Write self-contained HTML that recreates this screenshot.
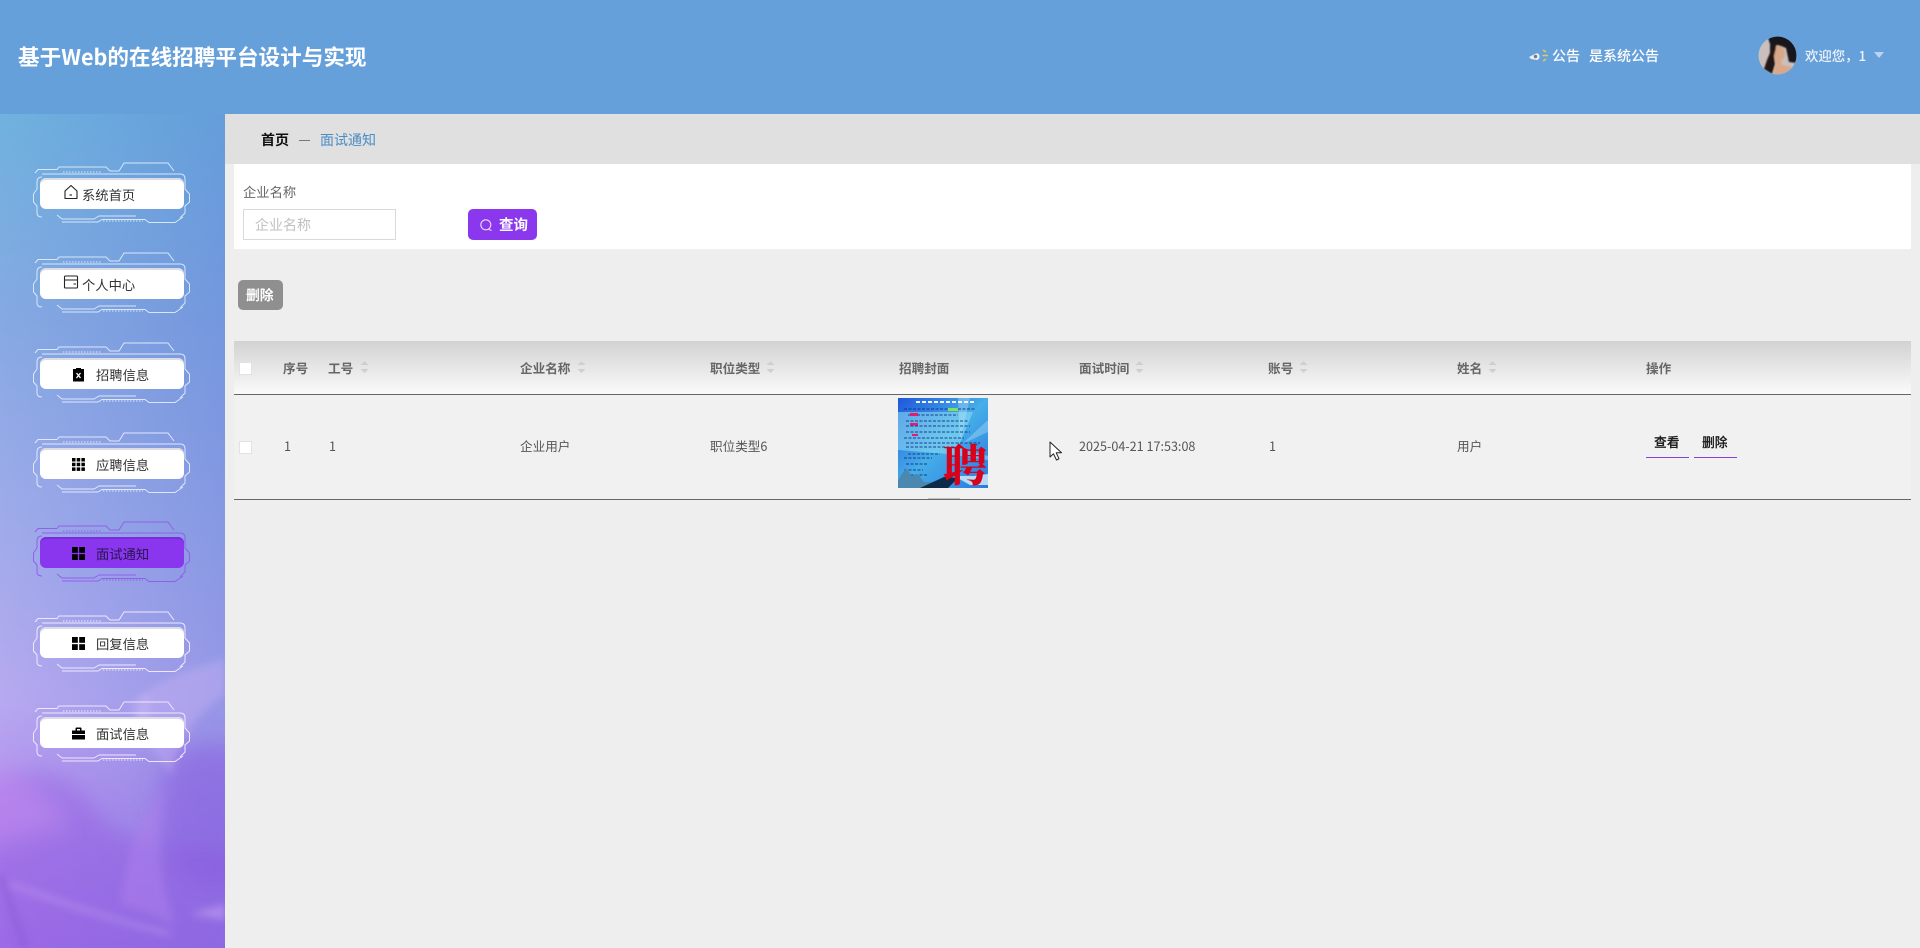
<!DOCTYPE html>
<html lang="zh">
<head>
<meta charset="utf-8">
<title>基于Web的在线招聘平台设计与实现</title>
<style>
html,body{margin:0;padding:0;width:1920px;height:948px;overflow:hidden;background:#eeeeee;font-family:"Noto Sans CJK SC","Liberation Sans",sans-serif;color:#555}
.a{position:absolute;white-space:nowrap}
.c{line-height:20px;height:20px}
#header{left:0;top:0;width:1920px;height:114px;background:#66a0da}
#side{left:0;top:114px;width:225px;height:834px;overflow:hidden;background:linear-gradient(90deg,rgba(75,110,210,0) 0%,rgba(75,110,210,.3) 100%),linear-gradient(180deg,#6fb2de 0%,#86a9e2 25%,#a0abea 50%,#b7a9f0 70%,#b492ee 82%,#a877ea 100%)}
.btn{position:absolute;left:40px;width:144px;height:31px;background:#fff;border-radius:6px;box-shadow:inset 0 2px 0 #dcdce4;font-size:13.3px;color:#333}
.btn.on{background:#8a35ee;box-shadow:inset 0 2px 0 #7a2cdc;color:#2a1650}
.btn span{position:absolute;top:7px;line-height:20px;white-space:nowrap}
.th{font-size:12.6px;font-weight:700;color:#666;top:358px}
.td{font-size:12.6px;color:#555;top:436px}
.sort{position:absolute;top:360px;width:9px;height:14px}
</style>
</head>
<body>
<svg width="0" height="0" style="position:absolute">
<defs>
<symbol id="fr" viewBox="0 0 180 100">
<path d="M15 22L18 18.500H37L39 16H86L90 20H99L104 12H148L154 20" fill="none" stroke-width="1"/>
<path d="M43 21H81" fill="none" stroke-width="1" stroke-dasharray="1.500 1.500"/>
<path d="M22 26Q17 26 17 31V38L13.500 43V51L17 55V62Q17 66 22 66" fill="none" stroke-width="1"/>
<path d="M22 23H160Q165 23 165 28V38L169.500 43V51L165 55V62L160 67" fill="none" stroke-width="1"/>
<path d="M37 64L42 68H74L79 65H116" fill="none" stroke-width="1"/>
<path d="M42 71H78L82 68.500H125L129 71.500H155L163 66" fill="none" stroke-width="1"/>
<path d="M83 70H123" fill="none" stroke-width="1" stroke-dasharray="1.500 1.500"/>
</symbol>
</defs>
</svg>

<div id="header" class="a">
  <div class="a" style="left:18px;top:41px;font-size:21.600px;line-height:32px;font-weight:700;color:#fff">基于Web的在线招聘平台设计与实现</div>
  <svg class="a" style="left:1528px;top:48px" width="22" height="16" viewBox="0 0 22 16">
    <path d="M1 9L8 5.500Q11 5 11.500 8Q12 11 9 12L3 11Z" fill="#e9eef2"/>
    <circle cx="7.500" cy="8.500" r="1.700" fill="#6d7d8c"/>
    <path d="M15 2L18 4M14.500 7.500H20M15 13L18 11" stroke="#d9cf5e" stroke-width="1.600" fill="none"/>
  </svg>
  <div class="a" style="left:1552px;top:45px;font-size:14px;line-height:22px;font-weight:500;color:#fff">公告</div>
  <div class="a" style="left:1589px;top:45px;font-size:14px;line-height:22px;font-weight:500;color:#fff">是系统公告</div>
  <svg class="a" style="left:1758px;top:36px" width="39" height="39" viewBox="0 0 39 39">
    <defs>
      <clipPath id="av"><circle cx="19.500" cy="19.500" r="19"/></clipPath>
      <filter id="avb"><feGaussianBlur stdDeviation=".7"/></filter>
    </defs>
    <g clip-path="url(#av)">
      <rect width="39" height="39" fill="#c9c0bd"/>
      <g filter="url(#avb)">
        <path d="M10 2Q20 -3 39 2V27L31 26L28 12L19 9L15 16L12 8Z" fill="#15151d"/>
        <path d="M18 10Q26 9 27 16Q27 23 23 25L24 29L34 31L39 39H15L18 28L16 20Q15 13 18 10Z" fill="#d9a88a"/>
        <path d="M12 9Q18 6 18 12L16 20L17 28L14 38L6 33L9 24L12 17Z" fill="#241815"/>
      </g>
    </g>
  </svg>
  <div class="a" style="left:1805px;top:45px;font-size:13.400px;line-height:20px;font-weight:500;color:#eef3fa">欢迎您，1</div>
  <div class="a" style="left:1874px;top:52px;width:0;height:0;border-left:5px solid transparent;border-right:5px solid transparent;border-top:6px solid #bcd4ef"></div>
</div>

<div id="side" class="a">
  <svg class="a" style="left:0;top:470px" width="225" height="364" viewBox="0 0 225 364">
    <defs>
      <filter id="b1" x="-30%" y="-30%" width="160%" height="160%"><feGaussianBlur stdDeviation="12"/></filter>
      <filter id="b2" x="-30%" y="-30%" width="160%" height="160%"><feGaussianBlur stdDeviation="4"/></filter>
    </defs>
    <g filter="url(#b1)">
      <path d="M-20 200Q50 170 90 220Q120 270 245 270V384H-20Z" fill="#8f58e0" opacity=".45"/>
      <path d="M-20 180Q30 190 70 240L-20 260Z" fill="#c48df0" opacity=".55"/>
      <path d="M170 170Q210 150 245 170V300Q190 310 165 270Q150 220 170 170Z" fill="#8452dd" opacity=".45"/>
    </g>
    <g filter="url(#b2)">
      <path d="M130 120Q165 90 225 75V110Q180 140 172 190Q150 170 130 120Z" fill="#c9b2f2" opacity=".4"/>
      <path d="M120 320Q150 330 175 340Q150 270 165 205Q130 240 120 320Z" fill="#ad80ec" opacity=".5"/>
      <path d="M10 300Q90 330 170 350" stroke="#c3a0f0" stroke-width="5" fill="none" opacity=".45"/>
      <path d="M0 290L25 364" stroke="#7c4ccd" stroke-width="8" fill="none" opacity=".3"/>
      <path d="M190 330L225 320V336Z" fill="#c39ff2" opacity=".6"/>
      <path d="M145 110Q155 115 140 165Q128 145 145 110Z" fill="#d8c2f5" opacity=".35"/>
    </g>
  </svg>
  <svg class="a" style="left:20px;top:37px;stroke:#d7e6fa" width="180" height="100"><use href="#fr"/></svg>
  <svg class="a" style="left:20px;top:127px;stroke:#d7e6fa" width="180" height="100"><use href="#fr"/></svg>
  <svg class="a" style="left:20px;top:217px;stroke:#dfe6fb" width="180" height="100"><use href="#fr"/></svg>
  <svg class="a" style="left:20px;top:307px;stroke:#e2e6fb" width="180" height="100"><use href="#fr"/></svg>
  <svg class="a" style="left:20px;top:396px;stroke:#9160ea" width="180" height="100"><use href="#fr"/></svg>
  <svg class="a" style="left:20px;top:486px;stroke:#efe8fd" width="180" height="100"><use href="#fr"/></svg>
  <svg class="a" style="left:20px;top:576px;stroke:#efe6fd" width="180" height="100"><use href="#fr"/></svg>

  <div class="btn" style="top:64px"><span style="left:42px">系统首页</span>
    <svg class="a" style="left:23px;top:6px" width="16" height="16" viewBox="0 0 16 16"><path d="M2 7L8 1.500L14 7V14.500H2Z" fill="none" stroke="#222" stroke-width="1.100" stroke-linejoin="round"/><path d="M6.500 11H9" stroke="#222" stroke-width="1.100"/></svg></div>
  <div class="btn" style="top:154px"><span style="left:42px">个人中心</span>
    <svg class="a" style="left:23px;top:6px" width="16" height="16" viewBox="0 0 16 16"><rect x="1.500" y="2" width="13" height="12" rx="1" fill="none" stroke="#222" stroke-width="1.100"/><path d="M1.500 6H14.500M10.500 10H13" stroke="#222" stroke-width="1.100"/></svg></div>
  <div class="btn" style="top:244px"><span style="left:56px">招聘信息</span>
    <svg class="a" style="left:32px;top:9px" width="13" height="15" viewBox="0 0 13 15"><path d="M1 2H4V1H9V2H12V14.500H1Z" fill="#000"/><path d="M4.500 6L8.500 11M8.500 6L4.500 11" stroke="#fff" stroke-width="1.300"/></svg></div>
  <div class="btn" style="top:334px"><span style="left:56px">应聘信息</span>
    <svg class="a" style="left:32px;top:10px" width="13" height="13" viewBox="0 0 13 13" fill="#000"><rect width="3.500" height="3.500"/><rect x="4.700" width="3.500" height="3.500"/><rect x="9.400" width="3.500" height="3.500"/><rect y="4.700" width="3.500" height="3.500"/><rect x="4.700" y="4.700" width="3.500" height="3.500"/><rect x="9.400" y="4.700" width="3.500" height="3.500"/><rect y="9.400" width="3.500" height="3.500"/><rect x="4.700" y="9.400" width="3.500" height="3.500"/><rect x="9.400" y="9.400" width="3.500" height="3.500"/></svg></div>
  <div class="btn on" style="top:423px"><span style="left:56px">面试通知</span>
    <svg class="a" style="left:32px;top:10px" width="13" height="13" viewBox="0 0 13 13" fill="#000"><rect width="5.800" height="5.800"/><rect x="7.200" width="5.800" height="5.800"/><rect y="7.200" width="5.800" height="5.800"/><rect x="7.200" y="7.200" width="5.800" height="5.800"/></svg></div>
  <div class="btn" style="top:513px"><span style="left:56px">回复信息</span>
    <svg class="a" style="left:32px;top:10px" width="13" height="13" viewBox="0 0 13 13" fill="#000"><rect width="5.800" height="5.800"/><rect x="7.200" width="5.800" height="5.800"/><rect y="7.200" width="5.800" height="5.800"/><rect x="7.200" y="7.200" width="5.800" height="5.800"/></svg></div>
  <div class="btn" style="top:603px"><span style="left:56px">面试信息</span>
    <svg class="a" style="left:32px;top:10px" width="13" height="13" viewBox="0 0 13 13"><path d="M0 3.500H3.500V1.500Q3.500 .5 4.500 .5H8.500Q9.500 .5 9.500 1.500V3.500H13V7H0ZM0 8H13V12.500H0ZM5 2V3.500H8V2Z" fill="#000" fill-rule="evenodd"/></svg></div>
</div>

<div class="a" style="left:225px;top:114px;width:1695px;height:50px;background:#e0e0e0"></div>
<div class="a" style="left:261px;top:130px;font-size:14px;line-height:20px;font-weight:700;color:#111">首页</div>
<div class="a" style="left:299px;top:140px;width:11px;height:1px;background:#777"></div>
<div class="a" style="left:320px;top:130px;font-size:14px;line-height:20px;color:#4a8cc4">面试通知</div>

<div class="a" style="left:234px;top:164px;width:1677px;height:85px;background:#fff"></div>
<div class="a" style="left:243px;top:182px;font-size:13.300px;line-height:20px;color:#666">企业名称</div>
<div class="a" style="left:243px;top:209px;width:151px;height:29px;border:1px solid #d9d9dd;background:#fff"></div>
<div class="a" style="left:255px;top:215px;font-size:14px;line-height:20px;color:#c0c0c0">企业名称</div>
<div class="a" style="left:468px;top:209px;width:69px;height:31px;background:#8a37ee;border-radius:5px"></div>
<svg class="a" style="left:479px;top:218px" width="14" height="14" viewBox="0 0 14 14"><circle cx="6.800" cy="6.800" r="5" fill="none" stroke="#e8dcfb" stroke-width="1.100"/><path d="M9 11L12.500 12.500" stroke="#e8dcfb" stroke-width="1.100"/></svg>
<div class="a" style="left:499px;top:215px;font-size:14.500px;line-height:20px;font-weight:700;color:#fff">查询</div>
<div class="a" style="left:238px;top:280px;width:45px;height:30px;background:#8f8f8f;border-radius:5px"></div>
<div class="a" style="left:246px;top:284px;font-size:13.800px;line-height:20px;font-weight:700;color:#fff">删除</div>

<div class="a" style="left:234px;top:341px;width:1677px;height:53px;background:linear-gradient(#d2d2d2,#e4e4e4 45%,#fafafa)"></div>
<div class="a" style="left:234px;top:394px;width:1677px;height:1px;background:#666"></div>
<div class="a" style="left:234px;top:395px;width:1677px;height:104px;background:#f1f1f2"></div>
<div class="a" style="left:234px;top:499px;width:1677px;height:1px;background:#666"></div>

<div class="a" style="left:239px;top:362px;width:11px;height:11px;background:#fff;border:1px solid #e2e2e2"></div>
<div class="a" style="left:239px;top:441px;width:11px;height:11px;background:#fff;border:1px solid #e2e2e2"></div>

<div class="a c th" style="left:283px">序号</div>
<div class="a c th" style="left:328px">工号</div>
<div class="a c th" style="left:520px">企业名称</div>
<div class="a c th" style="left:710px">职位类型</div>
<div class="a c th" style="left:899px">招聘封面</div>
<div class="a c th" style="left:1079px">面试时间</div>
<div class="a c th" style="left:1268px">账号</div>
<div class="a c th" style="left:1457px">姓名</div>
<div class="a c th" style="left:1646px">操作</div>

<svg class="sort" style="left:360px" viewBox="0 0 9 14"><path d="M4.500 1L8.500 5H.5ZM4.500 13L.5 9H8.500Z" fill="#cfcfcf"/></svg>
<svg class="sort" style="left:577px" viewBox="0 0 9 14"><path d="M4.500 1L8.500 5H.5ZM4.500 13L.5 9H8.500Z" fill="#cfcfcf"/></svg>
<svg class="sort" style="left:766px" viewBox="0 0 9 14"><path d="M4.500 1L8.500 5H.5ZM4.500 13L.5 9H8.500Z" fill="#cfcfcf"/></svg>
<svg class="sort" style="left:1135px" viewBox="0 0 9 14"><path d="M4.500 1L8.500 5H.5ZM4.500 13L.5 9H8.500Z" fill="#cfcfcf"/></svg>
<svg class="sort" style="left:1299px" viewBox="0 0 9 14"><path d="M4.500 1L8.500 5H.5ZM4.500 13L.5 9H8.500Z" fill="#cfcfcf"/></svg>
<svg class="sort" style="left:1488px" viewBox="0 0 9 14"><path d="M4.500 1L8.500 5H.5ZM4.500 13L.5 9H8.500Z" fill="#cfcfcf"/></svg>

<div class="a c td" style="left:284px">1</div>
<div class="a c td" style="left:329px">1</div>
<div class="a c td" style="left:520px">企业用户</div>
<div class="a c td" style="left:710px">职位类型6</div>
<div class="a c td" style="left:1079px">2025-04-21 17:53:08</div>
<div class="a c td" style="left:1269px">1</div>
<div class="a c td" style="left:1457px">用户</div>

<svg class="a" style="left:898px;top:398px" width="90" height="90" viewBox="0 0 90 90">
  <defs>
    <linearGradient id="pg" x1="0" y1="0" x2="1" y2="1"><stop offset="0" stop-color="#1f56dc"/><stop offset=".5" stop-color="#46aee8"/><stop offset="1" stop-color="#2a78e0"/></linearGradient>
  </defs>
  <rect width="90" height="90" fill="url(#pg)"/>
  <path d="M0 14H75L60 50L90 58V62L50 56L0 52Z" fill="#8fe0f2" opacity=".55"/>
  <path d="M60 0H72L62 44ZM90 22V34L64 46Z" fill="#bfe8f8" opacity=".35"/>
  <path d="M18 4H78" stroke="#eef5ff" stroke-width="2" stroke-dasharray="4 2"/>
  <g stroke="#0b2a80" stroke-width=".9" stroke-dasharray="3 1.500" opacity=".85">
    <path d="M6 11H78M10 17H60M8 23H70M8 28H72M8 34H72M6 40H66M8 45H82M8 49H60M10 56H42M6 60H34M8 66H30M6 72H25M8 77H30"/>
  </g>
  <path d="M50 10H60V13H50Z" fill="#7fe35a"/>
  <path d="M12 15H20V18H12ZM12 25H20V27.500H12ZM14 36H20V38H14Z" fill="#e0206a"/>
  <path d="M0 90V82L8 70L14 78L20 76L26 84H40L46 90Z" fill="#4a88b0"/>
  <path d="M22 90L46 79L60 80L50 90Z" fill="#0d2a48"/>
  <path d="M56 78L72 87H90V76L76 78Z" fill="#cfeaf5" opacity=".85"/>
  <text x="67" y="83" font-size="44" font-weight="900" fill="#d9001b" text-anchor="middle" style="font-family:'Noto Serif CJK SC','Noto Sans CJK SC',serif">聘</text>
</svg>
<div class="a" style="left:928px;top:498px;width:32px;height:1px;background:#c2c2c2"></div>

<svg class="a" style="left:1049px;top:441px" width="14" height="20" viewBox="0 0 14 20"><path d="M1 1V16L4.500 12.800L7.500 19L10 17.800L7.200 11.800H12.500Z" fill="#fff" stroke="#222" stroke-width="1" stroke-linejoin="round"/></svg>

<div class="a c" style="left:1654px;top:432px;font-size:12.800px;font-weight:700;color:#222">查看</div>
<div class="a" style="left:1646px;top:457px;width:43px;height:1px;background:#8a3fd8"></div>
<div class="a c" style="left:1702px;top:432px;font-size:12.800px;font-weight:700;color:#222">删除</div>
<div class="a" style="left:1694px;top:457px;width:43px;height:1px;background:#8a3fd8"></div>
</body>
</html>
